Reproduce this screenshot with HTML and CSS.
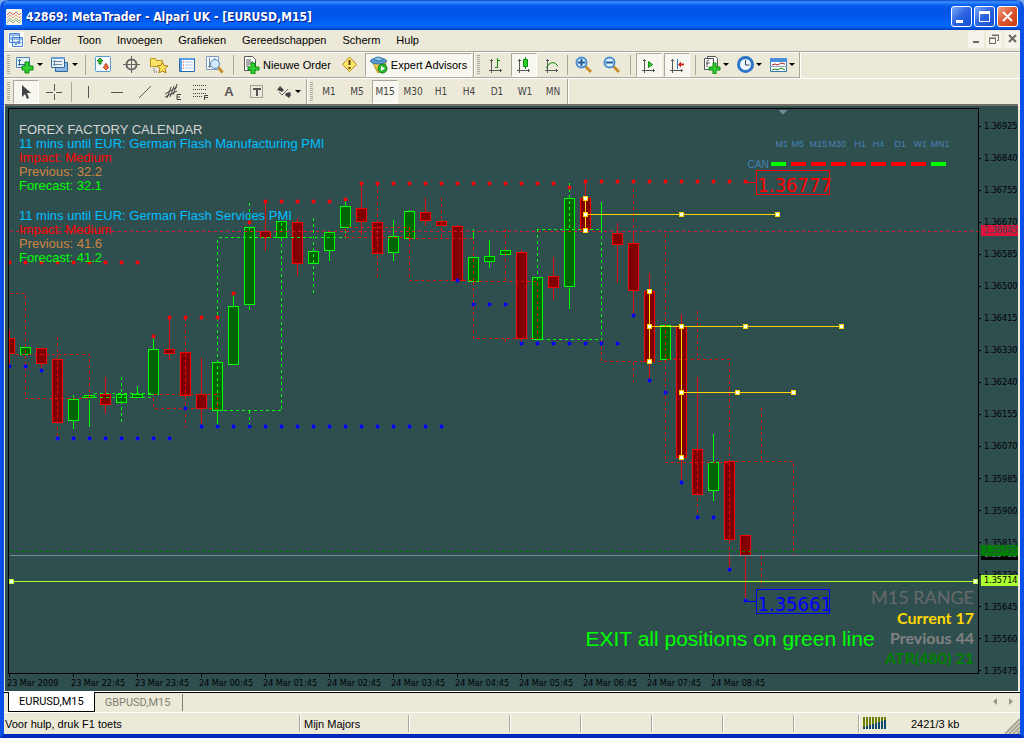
FILE: index.html
```html
<!DOCTYPE html>
<html lang="nl">
<head>
    <meta charset="UTF-8">
    <meta name="viewport" content="width=device-width, initial-scale=1.0">
    <title>42869: MetaTrader - Alpari UK - [EURUSD,M15]</title>
    <link rel="stylesheet" href="styles.css">
</head>
<body>
<div class="window">
    <header class="titlebar">
        <svg class="app-icon" width="16" height="16" viewBox="0 0 16 16"><rect width="16" height="16" rx="1" fill="#f6f3e8"/><path d="M1 6l3-3 3 3 3-3 3 3 2-2" fill="none" stroke="#d66"/><path d="M1 9l3-3 3 3 3-3 3 3 2-2" fill="none" stroke="#e8a070"/><path d="M1 12l3-3 3 3 3-3 3 3 2-2M1 14l3-3 3 3 3-3 3 3 2-2" fill="none" stroke="#9bb88a"/></svg>
        <h1>42869: MetaTrader - Alpari UK - [EURUSD,M15]</h1>
        <div class="window-buttons">
            <button class="win-btn" aria-label="Minimize"><svg width="19" height="19"><path d="M4 13h7v3H4z" fill="#fff"/></svg></button>
            <button class="win-btn" aria-label="Maximize"><svg width="19" height="19"><path d="M4.500 5.500h10v9h-10z" fill="none" stroke="#fff"/><path d="M4 4h11v3H4z" fill="#fff"/></svg></button>
            <button class="win-btn close" aria-label="Close"><svg width="19" height="19"><path d="M5 5l9 9M14 5l-9 9" stroke="#fff" stroke-width="2"/></svg></button>
        </div>
    </header>

    <nav class="menubar">
        <svg class="doc-icon" width="16" height="16" viewBox="0 0 16 16"><rect width="16" height="16" fill="#fff"/><path d="M1.500 1.500h10v9h-10zM4.500 5.500h10v9h-10z" fill="#eef4ff" stroke="#4a86d8"/><path d="M2 3h9M5 7h9" stroke="#4a86d8"/><path d="M6 9l2 4 2-4 1 3 2-2M3 5v3M5 4v1" fill="none" stroke="#4a86d8"/></svg>
        <button>Folder</button>
        <button>Toon</button>
        <button>Invoegen</button>
        <button>Grafieken</button>
        <button>Gereedschappen</button>
        <button>Scherm</button>
        <button>Hulp</button>
        <div class="mdi-buttons">
            <button aria-label="Minimize chart"><svg width="16" height="16"><path d="M5 10h6v2H5z" fill="#6b6a60"/></svg></button>
            <button aria-label="Restore chart"><svg width="16" height="16" fill="none" stroke="#6b6a60"><path d="M3.500 7.500h6v5h-6zM3 7h7M6 4.500h6.500v5H11M6 4h7"/></svg></button>
            <button aria-label="Close chart"><svg width="16" height="16"><path d="M5 4l7 7M12 4l-7 7" stroke="#6b6a60" stroke-width="2"/></svg></button>
        </div>
    </nav>

    <div class="toolbar-row">
        <div class="toolbar">
            <span class="grip"></span>
            <button class="tool drop" aria-label="New chart"><svg width="20" height="18"><path d="M.5 1.500h13v10H.5z" fill="#e9f2fb" stroke="#4a86b8"/><path d="M3.500 3v7M2 8.500h9M2 4.500h3" stroke="#2c6a9c"/><path d="M9 6h4v4h4v4h-4v3H9v-3H6v-4h3z" fill="#2fd02f" stroke="#0a8a0a"/></svg></button>
            <button class="tool drop" aria-label="Profiles"><svg width="20" height="18"><path d="M4.500 6.500h12v9h-12z" fill="#8fb9e4" stroke="#2c6a9c"/><path d="M.5 1.500h13v10H.5z" fill="#e9f2fb" stroke="#2c6a9c"/><path d="M0 2h14" stroke="#6ba3dc" stroke-width="2"/><path d="M3.500 4v6M2 8.500h9M2 5.500h9" stroke="#6b8aa8"/></svg></button>
            <span class="sep"></span>
            <button class="tool" aria-label="Market watch"><svg width="17" height="17"><rect x=".5" y=".5" width="15" height="15" rx="1" fill="#f4faff" stroke="#5a9bd0"/><path d="M5 2l3 3H6v3H4V5H2z" fill="#3fc63f" stroke="#167a16"/><path d="M11 14l-3-3h2V8h2v3h2z" fill="#f08a50" stroke="#c03a10"/></svg></button>
            <button class="tool" aria-label="Data window"><svg width="17" height="17" fill="none" stroke="#666"><circle cx="8.500" cy="8.500" r="5" stroke-width="2"/><path d="M8.500 0v17M0 8.500h17"/></svg></button>
            <button class="tool" aria-label="Navigator"><svg width="19" height="18"><path d="M.5 2.500h5l1 2h6v6H.5z" fill="#f8e268" stroke="#b89420"/><path d="M4 12v4h4" fill="none" stroke="#555" stroke-dasharray="1 1"/><path d="M12.500 6l1.500 3.500 4 .5-3 2.500 1 4.500-3.500-2-3.500 2 1-4.500-3-2.500 4-.5z" fill="#ffe45c" stroke="#a87c10"/></svg></button>
            <button class="tool" aria-label="Terminal"><svg width="17" height="16"><path d="M.5 1.500h15v13H.5z" fill="#fff" stroke="#2c6ab0"/><path d="M1 2h14M2 2v12" stroke="#5aa0e8" stroke-width="2"/><path d="M6 5h8M6 8h8M6 11h8" stroke="#a8c8e8"/><path d="M4 5h1M4 8h1M4 11h1" stroke="#d22"/></svg></button>
            <button class="tool" aria-label="Strategy tester"><svg width="18" height="18"><path d="M.5 .5h12v13H.5z" fill="#f4faff" stroke="#7a9cc0"/><path d="M3.500 2v10M2 10.500h9M8.500 2v10" stroke="#789"/><circle cx="9" cy="8" r="4.500" fill="#cfe8fa" stroke="#5a8ab8"/><path d="M12.500 11.500l4 5" stroke="#c8902c" stroke-width="3"/></svg></button>
            <span class="sep wide"></span>
            <button class="tool text order"><svg width="17" height="18"><path d="M1.500 .5h8l3 3v11h-11z" fill="#fff" stroke="#555"/><path d="M3 4h5M3 6h7M3 8h7M3 10h3" stroke="#555"/><path d="M8 7h4v4h4v3h-4v4H8v-4H5v-3h3z" fill="#2fd02f" stroke="#0a8a0a"/></svg>Nieuwe Order</button>
            <button class="tool" aria-label="MetaEditor"><svg width="17" height="17"><path d="M8.500 1l7 7.500-7 7-7-7z" fill="#ffe66a" stroke="#b58a10"/><path d="M8.500 4v5M8.500 11v2" stroke="#5a3c00" stroke-width="2"/></svg></button>
            <button class="tool text pressed"><svg width="18" height="18"><path d="M2 5l6 12 7-5 1-6z" fill="#f5cf4a" stroke="#b58a10"/><ellipse cx="8.500" cy="5" rx="8" ry="3" fill="#5a9ad0" stroke="#3a78b0"/><path d="M4 4q0-3 4-3t5 3q-5 2-9 0z" fill="#8cc4ec" stroke="#3a78b0"/><circle cx="12.500" cy="12.500" r="4.500" fill="#2fb82f" stroke="#0a7a0a"/><path d="M11 10l4 2.500-4 2.500z" fill="#fff"/></svg>Expert Advisors</button>
        </div>
        <div class="toolbar charts">
            <span class="grip"></span>
            <button class="tool" aria-label="Bar chart"><svg width="16" height="16" fill="none" stroke="#555"><path d="M3.500 2v14M1 13.500h13M2 3.500h3M12.500 12v3"/><path d="M7 10.500h2.500v-7H12M9.500 1v10" stroke="#0a8a0a"/></svg></button>
            <button class="tool pressed" aria-label="Candlesticks"><svg width="16" height="16" fill="none" stroke="#555"><path d="M3.500 2v14M1 13.500h13M2 3.500h3M12.500 12v3"/><path d="M9.500 0v12" stroke="#0a8a0a"/><path d="M7.500 2.500h4v7h-4z" fill="#2fd02f" stroke="#0a8a0a"/></svg></button>
            <button class="tool" aria-label="Line chart"><svg width="16" height="16" fill="none" stroke="#555"><path d="M3.500 2v14M1 13.500h13M2 3.500h3M12.500 12v3"/><path d="M2 11q6-10 12-2" stroke="#0a8a0a"/></svg></button>
            <span class="sep narrow"></span>
            <button class="tool" aria-label="Zoom in"><svg width="18" height="18"><path d="M10 10l6 6" stroke="#c8902c" stroke-width="3"/><circle cx="6.500" cy="6.500" r="5" fill="#e4f3ff" stroke="#4a8ed0" stroke-width="2"/><path d="M3 6.500h7M6.500 3v7" stroke="#1c5a9c" stroke-width="2"/></svg></button>
            <button class="tool" aria-label="Zoom out"><svg width="18" height="18"><path d="M10 10l6 6" stroke="#c8902c" stroke-width="3"/><circle cx="6.500" cy="6.500" r="5" fill="#e4f3ff" stroke="#4a8ed0" stroke-width="2"/><path d="M3 6.500h7" stroke="#1c5a9c" stroke-width="2"/></svg></button>
            <span class="sep wide"></span>
            <button class="tool pressed" aria-label="Auto scroll"><svg width="16" height="16" fill="none" stroke="#555"><path d="M3.500 2v14M1 13.500h13M2 3.500h3M12.500 12v3"/><path d="M7.500 4.500l4 3-4 3z" fill="#2fd02f" stroke="#0a8a0a"/></svg></button>
            <button class="tool pressed" aria-label="Chart shift"><svg width="16" height="16" fill="none" stroke="#555"><path d="M3.500 2v14M1 13.500h13M2 3.500h3M12.500 12v3"/><path d="M8.500 2v10" stroke="#2c78c8"/><path d="M9 7.500l3-3v2h3v2h-3v2z" fill="#c22" stroke="none"/></svg></button>
            <span class="sep wide"></span>
            <button class="tool drop" aria-label="Indicators"><svg width="18" height="18"><path d="M3.500 .5h8l2 2v10h-10z" fill="#fff" stroke="#555"/><path d="M.5 2.500h9v11h-9z" fill="#fff" stroke="#555"/><path d="M3 11V6q0-2 2-2M2 7h4" fill="none" stroke="#555"/><path d="M9 7h3v4h4v3h-4v4H9v-4H5v-3h4z" fill="#2fd02f" stroke="#0a8a0a"/></svg></button>
            <button class="tool drop" aria-label="Periods"><svg width="18" height="18"><circle cx="8.500" cy="8.500" r="7" fill="#eef7ff" stroke="#2c74c4" stroke-width="3"/><path d="M8.500 4v5h4" fill="none" stroke="#345"/></svg></button>
            <button class="tool drop" aria-label="Templates"><svg width="18" height="16"><path d="M.5 1.500h16v13H.5z" fill="#fff" stroke="#3a78b0"/><path d="M0 3h17" stroke="#4a90d8" stroke-width="4"/><path d="M2 8l3-1 3 1 3-2 4 1" fill="none" stroke="#a22"/><path d="M0 9.500h17" stroke="#8ab"/><path d="M2 13l3-1 3 1 3-2 4 2" fill="none" stroke="#0a8a0a"/></svg></button>
        </div>
    </div>

    <div class="toolbar-row">
        <div class="toolbar">
            <span class="grip"></span>
            <button class="tool pressed" aria-label="Cursor"><svg width="16" height="16"><path d="M4 1v12l3-3 2 5 2-1-2-5h4z" fill="#444"/></svg></button>
            <button class="tool" aria-label="Crosshair"><svg width="16" height="16" shape-rendering="crispEdges"><path d="M8.500 0v7M8.500 10v7M0 8.500h7M10 8.500h7" stroke="#555"/></svg></button>
            <span class="sep"></span>
            <button class="tool" aria-label="Vertical line"><svg width="16" height="16"><path d="M7.500 2v12" stroke="#555"/></svg></button>
            <button class="tool" aria-label="Horizontal line"><svg width="16" height="16"><path d="M2 8.500h12" stroke="#555"/></svg></button>
            <button class="tool" aria-label="Trendline"><svg width="16" height="16"><path d="M2 14L14 2" stroke="#555"/></svg></button>
            <button class="tool" aria-label="Equidistant channel"><svg width="18" height="18" stroke="#444"><path d="M1 11L13 4M1 14L13 8M3 15L7 4M6 14l4-11M9 12l4-11"/><path d="M17 11.500h-4v5h4M13 14h3" fill="none"/></svg></button>
            <button class="tool" aria-label="Fibonacci"><svg width="18" height="18" stroke="#444"><path d="M1 2.500h13M1 6.500h13M1 10.500h13M1 13.500h9" stroke-dasharray="1 1"/><path d="M16 12.500h-3.500V17M13 14.500h3" fill="none"/></svg></button>
            <button class="tool glyph">A</button>
            <button class="tool" aria-label="Text label"><svg width="16" height="16" fill="none" stroke="#555"><path d="M1.500 1.500h12v12h-12z" stroke-dasharray="1 1"/><path d="M4 5h8M8 5v7" stroke-width="2"/></svg></button>
            <button class="tool drop" aria-label="Arrows"><svg width="18" height="16"><path d="M4 2l4 4-2 2-2-1-3-1zM10 9l4-1 1 3-2 3-4-3z" fill="#444"/><path d="M3 8l3 3 6-6" fill="none" stroke="#666"/></svg></button>
        </div>
        <div class="toolbar periods">
            <span class="grip"></span>
            <button class="tool">M1</button>
            <button class="tool">M5</button>
            <button class="tool pressed">M15</button>
            <button class="tool">M30</button>
            <button class="tool">H1</button>
            <button class="tool">H4</button>
            <button class="tool">D1</button>
            <button class="tool">W1</button>
            <button class="tool">MN</button>
        </div>
    </div>

    <main class="chart">
        <div class="plot">
            <svg class="candles" width="100%" height="100%">
                <defs>
                    <rect id="handle" x="-2" y="-2" width="4" height="4" fill="#fff"/>
                </defs>
                <g transform="translate(-8.5 -108.5)">
                    <path class="shift-mark" d="M777 109h10l-5 5z"/>

                    <!-- wicks -->
                    <path class="wick down" d="M9 329V364M41 363V368M105 376V413M169 317V359M201 357V423M265 201V250M297 217V275M361 183V234M425 197V225M457 224V227M521 249V342M553 256V299M585 181V198M617 222V282M633 232V313M649 272V378M681 313V479M697 376V449M729 555V567M745 555V600"/>
                    <path class="wick up" d="M73 394V428M89 399V426M137 385V394M153 336V349M217 410V425M233 293V306M249 305V309M329 230V260M345 199V206M393 219V260M409 209V211M473 228V238M489 239V267M569 287V308M601 201V230M713 433V500"/>

                    <!-- candle bodies -->
                    <g class="body down">
                        <path d="M9 338h5v15H9"/>
                        <rect x="36" y="348" width="10" height="15"/>
                        <rect x="52" y="359" width="10" height="63"/>
                        <rect x="100" y="394" width="10" height="10"/>
                        <rect x="164" y="349" width="10" height="4"/>
                        <rect x="180" y="352" width="10" height="43"/>
                        <rect x="196" y="394" width="10" height="14"/>
                        <rect x="260" y="231" width="10" height="6"/>
                        <rect x="292" y="222" width="10" height="41"/>
                        <rect x="356" y="208" width="10" height="13"/>
                        <rect x="372" y="222" width="10" height="31"/>
                        <rect x="420" y="212" width="10" height="8"/>
                        <rect x="436" y="221" width="10" height="4"/>
                        <rect x="452" y="226" width="10" height="54"/>
                        <rect x="516" y="252" width="10" height="86"/>
                        <rect x="548" y="276" width="10" height="11"/>
                        <rect x="580" y="198" width="10" height="31"/>
                        <rect x="612" y="233" width="10" height="11"/>
                        <rect x="628" y="243" width="10" height="47"/>
                        <rect x="644" y="291" width="10" height="70"/>
                        <rect x="676" y="326" width="10" height="131"/>
                        <rect x="692" y="449" width="10" height="45"/>
                        <rect x="724" y="461" width="10" height="78"/>
                        <rect x="740" y="535" width="10" height="20"/>
                    </g>
                    <g class="body up">
                        <rect x="20" y="347" width="10" height="7"/>
                        <rect x="68" y="399" width="10" height="21"/>
                        <rect x="84" y="395" width="10" height="2"/>
                        <rect x="116" y="394" width="10" height="8"/>
                        <rect x="132" y="394" width="10" height="3"/>
                        <rect x="148" y="349" width="10" height="45"/>
                        <rect x="212" y="362" width="10" height="48"/>
                        <rect x="228" y="306" width="10" height="58"/>
                        <rect x="244" y="227" width="10" height="77"/>
                        <rect x="276" y="221" width="10" height="16"/>
                        <rect x="308" y="251" width="10" height="12"/>
                        <rect x="324" y="232" width="10" height="18"/>
                        <rect x="340" y="206" width="10" height="21"/>
                        <rect x="388" y="236" width="10" height="16"/>
                        <rect x="404" y="211" width="10" height="27"/>
                        <rect x="468" y="257" width="10" height="24"/>
                        <rect x="484" y="256" width="10" height="5"/>
                        <rect x="500" y="250" width="10" height="4"/>
                        <rect x="532" y="277" width="10" height="62"/>
                        <rect x="564" y="198" width="10" height="88"/>
                        <rect x="660" y="325" width="10" height="34"/>
                        <rect x="708" y="462" width="10" height="28"/>
                    </g>

                    <!-- higher timeframe boxes -->
                    <path class="box up" d="M93 393H153M81 397H153M121 376V424M217 410V237H345V228M217 410H281V237M249 202V230M249 410V426M313 217V295M281 231V221M537 339V229H601V339H537M569 182V229"/>
                    <path class="box down" d="M9 293H25V398H89V354H14M57 336V439M153 394H217V408H153ZM185 317V427M345 237H409V227H345ZM377 183V276M409 238H473V280H409ZM441 197V237M473 281V338H537V281H473M505 228V280M505 338V342M601 339V361H665M633 188V243M633 361V381M665 233V462H729V359H665M697 310V359M697 449V517M729 461H793V555H729V461M761 407V458M761 555V586"/>

                    <!-- fractal stops -->
                    <path class="dots down" d="M9 262H138M265 201H330M361 183H554M585 181H746M169 317H218M153 336h1M233 293h1M249 222h1M345 199h1M569 187h1"/>
                    <path class="dots up" d="M9 366H26M41 370h1M57 438H170M185 408h1M201 426H442M457 280h1M473 304H506M521 343H618M633 315h1M649 380h1M665 392h1M681 482h1M697 517H714M729 569h1M745 600h1"/>

                    <!-- price levels -->
                    <path class="level bid-high" d="M9 231H978"/>
                    <path class="level target" d="M9 551H978"/>
                    <path class="level bid" d="M9 555H978"/>
                    <path class="level exit" d="M9 581H978"/>

                    <path class="trend" d="M585 198V230M585 214H777M649 291V361M649 326H841M681 326V457M681 392H793"/>
                    <g class="handles">
                        <use href="#handle" x="585" y="198"/><use href="#handle" x="585" y="214"/><use href="#handle" x="585" y="230"/>
                        <use href="#handle" x="681" y="214"/><use href="#handle" x="777" y="214"/>
                        <use href="#handle" x="649" y="291"/><use href="#handle" x="649" y="326"/><use href="#handle" x="649" y="361"/>
                        <use href="#handle" x="681" y="326"/><use href="#handle" x="745" y="326"/><use href="#handle" x="841" y="326"/>
                        <use href="#handle" x="681" y="392"/><use href="#handle" x="681" y="457"/><use href="#handle" x="737" y="392"/><use href="#handle" x="793" y="392"/>
                    </g>
                    <g class="handles exit"><use href="#handle" x="11" y="581"/><use href="#handle" x="975" y="581"/></g>

                    <g class="price-box high"><path d="M745 182H756V170H829V194H756V182"/><text x="757" y="191">1.36777</text></g>
                    <g class="price-box low"><path d="M745 601H756V589H829V613H756V601"/><text x="757" y="610">1.35661</text></g>

                    <!-- candle colour per timeframe -->
                    <g class="frames">
                        <text x="775" y="146">M1</text><text x="791" y="146">M5</text><text x="809" y="146">M15</text>
                        <text x="828" y="146">M30</text><text x="854" y="146">H1</text><text x="872" y="146">H4</text>
                        <text x="894" y="146">D1</text><text x="913" y="146">W1</text><text x="930" y="146">MN1</text>
                        <text class="pair" x="747" y="167">CAN</text>
                        <path class="short" d="M790 163H925"/>
                        <path class="long" d="M770 163H785M930 163H945"/>
                    </g>
                    <text class="exit-note" x="585" y="645">EXIT all positions on green line</text>
                </g>
            </svg>

            <div class="calendar">
                <h2>FOREX FACTORY CALENDAR</h2>
                <div class="event">
                    <p class="headline">11 mins until EUR: German Flash Manufacturing PMI</p>
                    <p class="impact">Impact: Medium</p>
                    <p class="previous">Previous: 32.2</p>
                    <p class="forecast">Forecast: 32.1</p>
                </div>
                <div class="event">
                    <p class="headline">11 mins until EUR: German Flash Services PMI</p>
                    <p class="impact">Impact: Medium</p>
                    <p class="previous">Previous: 41.6</p>
                    <p class="forecast">Forecast: 41.2</p>
                </div>
            </div>

            <div class="range">
                <p class="range-title">M15 RANGE</p>
                <p class="range-current">Current 17</p>
                <p class="range-previous">Previous 44</p>
                <p class="range-atr">ATR(480) 21</p>
            </div>
        </div>

        <div class="price-axis">
            <ul>
                <li>1.36925</li><li>1.36840</li><li>1.36755</li><li>1.36670</li><li>1.36585</li><li>1.36500</li>
                <li>1.36415</li><li>1.36330</li><li>1.36240</li><li>1.36155</li><li>1.36070</li><li>1.35985</li>
                <li>1.35900</li><li>1.35815</li><li>1.35730</li><li>1.35645</li><li>1.35560</li><li>1.35475</li>
            </ul>
            <span class="tag tag-high">1.36645</span>
            <span class="tag tag-bid">1.35783</span>
            <span class="tag tag-target">1.35793</span>
            <span class="tag tag-exit">1.35714</span>
        </div>

        <ul class="time-axis">
            <li>23 Mar 2009</li><li>23 Mar 22:45</li><li>23 Mar 23:45</li><li>24 Mar 00:45</li>
            <li>24 Mar 01:45</li><li>24 Mar 02:45</li><li>24 Mar 03:45</li><li>24 Mar 04:45</li>
            <li>24 Mar 05:45</li><li>24 Mar 06:45</li><li>24 Mar 07:45</li><li>24 Mar 08:45</li>
        </ul>
    </main>

    <div class="tabs">
        <button class="tab active">EURUSD,M15</button>
        <button class="tab">GBPUSD,M15</button>
        <div class="tab-scroll">
            <button aria-label="Previous tab"><svg width="5" height="8"><path d="M5 0v7L1 3.500z" fill="#9a978a"/></svg></button>
            <button aria-label="Next tab"><svg width="5" height="8"><path d="M0 0v7l4-3.500z" fill="#9a978a"/></svg></button>
        </div>
    </div>

    <footer class="statusbar">
        <span class="help">Voor hulp, druk F1 toets</span>
        <span class="cell profile">Mijn Majors</span>
        <span class="cell"></span>
        <span class="cell"></span>
        <span class="cell"></span>
        <span class="cell"></span>
        <span class="cell"></span>
        <span class="cell last"></span>
        <span class="cell traffic">
            <svg width="24" height="13" shape-rendering="crispEdges"><path d="M1 0v12M4 0v12M7 0v12M10 0v12M13 0v12M16 0v12M19 0v12M22 0v12" stroke="#6b8000" stroke-width="2"/><path d="M1 10v2M4 9v3M7 8v4M10 7v5M13 6v6M16 5v7M19 4v8M22 3v9" stroke="#0f4a6e" stroke-width="2"/></svg>
            2421/3 kb
        </span>
        <svg class="resize" width="16" height="16"><path d="M1 16L16 1M5 16L16 5M9 16l7-7M13 16l3-3" stroke="#a9a695" stroke-width="2"/></svg>
    </footer>
</div>
</body>
</html>
```

FILE: styles.css
```css
* {
    margin: 0;
    padding: 0;
    box-sizing: border-box;
}

body {
    height: 100vh;
    background: #7aa7e8;
    font-family: 'Liberation Sans', Arial, sans-serif;
    font-size: 11px;
    color: #000;
    overflow: hidden;
}

button {
    font: inherit;
    color: inherit;
    background: none;
    border: none;
}

ul {
    list-style: none;
}

.window {
    height: 100vh;
    display: flex;
    flex-direction: column;
    background: #ece9d8;
    border: 4px solid #0a50e8;
    border-top: none;
    border-bottom-color: #0028b8;
    border-radius: 8px 8px 0 0;
    overflow: hidden;
}

/* Title bar */
.titlebar {
    height: 30px;
    margin: 0 -4px;
    padding: 3px 6px 0 6px;
    display: flex;
    align-items: center;
    gap: 4px;
    flex-shrink: 0;
    background: linear-gradient(to bottom, #0a48c8 0, #3a90ff 2px, #0860f0 5px, #0054e3 10px, #0058ee 18px, #0468ff 26px, #0048d0 29px, #0038b8 30px);
}

.titlebar h1 {
    flex: 1;
    font-family: 'DejaVu Sans Condensed', Verdana, sans-serif;
    font-size: 12px;
    font-weight: bold;
    color: #fff;
    text-shadow: 1px 1px 0 #0a1883;
    white-space: nowrap;
}

.window-buttons {
    display: flex;
    gap: 2px;
}

.win-btn {
    width: 21px;
    height: 21px;
    border: 1px solid #fff;
    border-radius: 3px;
    background: linear-gradient(135deg, #7aa8f8, #2a62e0 50%, #1a50d0);
}

.win-btn svg {
    display: block;
}

.win-btn.close {
    background: linear-gradient(135deg, #f0a080, #dc5530 50%, #c83c10);
}

/* Menu */
.menubar {
    height: 22px;
    padding-left: 4px;
    display: flex;
    align-items: flex-start;
    flex-shrink: 0;
    border-bottom: 1px solid #aca899;
    box-shadow: 0 1px 0 #fff;
}

.menubar > button {
    height: 20px;
    padding: 0 8px;
}

.doc-icon {
    margin: 2px -2px 0 0;
}

.mdi-buttons {
    margin-left: auto;
    display: flex;
    gap: 2px;
}

.mdi-buttons button {
    width: 16px;
    height: 17px;
    margin-top: 1px;
    background: #f5f3ea;
}

/* Toolbars */
.toolbar-row {
    height: 27px;
    display: flex;
    flex-shrink: 0;
    border-bottom: 1px solid #fff;
}

.toolbar {
    display: flex;
    align-items: center;
    padding-left: 3px;
    border-right: 1px solid #aca899;
    border-bottom: 1px solid #aca899;
    box-shadow: 1px 0 0 #fff;
}

.grip {
    width: 3px;
    height: 20px;
    margin-right: 2px;
    background: repeating-linear-gradient(to bottom, #aca899 0 1px, #ece9d8 1px 2px);
}

.tool {
    width: 28px;
    height: 24px;
    display: flex;
    align-items: center;
    justify-content: center;
}

.tool.pressed {
    width: 26px;
    margin: 0 1px;
    background: #f7f6ef;
    border: 1px solid;
    border-color: #aca899 #fff #fff #aca899;
}

.tool.text {
    width: auto;
    padding: 0 4px;
    gap: 3px;
    white-space: nowrap;
}

.tool.order {
    padding: 0 5px;
}

.tool.drop {
    width: 35px;
    gap: 1px;
}

.charts .tool.drop {
    width: 33px;
}

.tool.drop::after {
    content: "";
    border: 3px solid transparent;
    border-top-color: #000;
    border-bottom: none;
}

.tool.glyph {
    font-size: 13px;
    font-weight: bold;
    color: #555;
}

.sep {
    width: 1px;
    height: 20px;
    margin: 0 3px;
    background: #aca899;
}

.sep.narrow {
    margin: 0 2px 0 1px;
}

.sep.wide {
    margin: 0 4px;
}

.periods .tool {
    font-family: 'DejaVu Sans Condensed', Verdana, sans-serif;
    font-size: 10px;
    color: #444;
}

/* Chart */
.chart {
    flex: 1;
    min-height: 0;
    padding: 2px 0 0 3px;
    margin: 0 2px 0 1px;
    display: grid;
    grid-template-columns: 1fr 39px;
    grid-template-rows: 1fr 17px;
    background: #2f4f4f;
    box-shadow: 0 -2px 0 #716f64;
    font-family: 'DejaVu Sans Condensed', Verdana, sans-serif;
    font-size: 9px;
}

.plot {
    position: relative;
    min-width: 0;
    min-height: 0;
    border: 1px solid #000;
}

.candles {
    position: absolute;
    left: 0;
    top: 0;
    fill: none;
    shape-rendering: crispEdges;
}

.shift-mark {
    fill: #778899;
}

.wick.down,
.box.down {
    stroke: #e01010;
}

.wick.up,
.box.up {
    stroke: #00ff00;
}

.box {
    stroke-dasharray: 3 3;
}

.body.down {
    fill: #800000;
    stroke: #ff0000;
}

.body.up {
    fill: #006400;
    stroke: #00ff00;
}

.dots {
    stroke-width: 4;
    stroke-linecap: round;
    stroke-dasharray: 0 16;
    shape-rendering: auto;
}

.dots.down {
    stroke: #ff0000;
}

.dots.up {
    stroke: #0000ff;
}

.level.bid-high {
    stroke: #dc143c;
    stroke-dasharray: 3 3;
}

.level.target {
    stroke: #008000;
    stroke-dasharray: 3 3;
}

.level.bid {
    stroke: #778899;
}

.level.exit {
    stroke: #adff2f;
}

.trend,
.handles {
    stroke: #ffd700;
}

.handles.exit {
    stroke: #adff2f;
}

.price-box {
    font-size: 20px;
}

.price-box.high path {
    stroke: #ff0000;
}

.price-box.high text {
    fill: #ff0000;
}

.price-box.low path {
    stroke: #0000ff;
}

.price-box.low text {
    fill: #0000ff;
}

.frames text {
    font-family: 'Liberation Sans', Arial, sans-serif;
    font-size: 9px;
    fill: #4682b4;
}

.frames .pair {
    font-size: 10px;
}

.frames path {
    stroke-width: 4;
}

.frames .short {
    stroke: #ff0000;
    stroke-dasharray: 15 5;
}

.frames .long {
    stroke: #00ff00;
}

.exit-note {
    font-family: 'Liberation Sans', Arial, sans-serif;
    font-size: 21px;
    fill: #00ff00;
}

.calendar {
    position: absolute;
    left: 10px;
    top: 14px;
    font-family: 'Liberation Sans', Arial, sans-serif;
    font-size: 13px;
    line-height: 14px;
    white-space: nowrap;
}

.calendar h2 {
    font-size: 13px;
    font-weight: normal;
    color: #d3d3d3;
}

.event {
    margin-bottom: 16px;
}

.headline {
    color: #00bfff;
}

.impact {
    color: #ff0000;
}

.previous {
    color: #cd853f;
}

.forecast {
    color: #00ff00;
}

.range {
    position: absolute;
    right: 4px;
    bottom: 5px;
    font-family: Lato, sans-serif;
    font-size: 16px;
    font-weight: bold;
    line-height: 20px;
    text-align: right;
}

.range-title {
    font-size: 18px;
    font-weight: normal;
    line-height: 22px;
    color: #696969;
}

.range-current {
    color: #ffd700;
}

.range-previous {
    color: #808080;
}

.range-atr {
    color: #008000;
}

.price-axis {
    grid-row: 1 / 3;
    grid-column: 2;
    position: relative;
}

.price-axis ul {
    height: 100%;
    padding: 12px 0 14px;
    display: flex;
    flex-direction: column;
    justify-content: space-between;
}

.price-axis li {
    height: 12px;
    line-height: 12px;
    display: flex;
    align-items: center;
    gap: 3px;
}

.price-axis li::before {
    content: "";
    width: 2px;
    height: 1px;
    background: #000;
}

.tag {
    position: absolute;
    left: 2px;
    right: 0;
    height: 11px;
    padding-left: 3px;
    line-height: 11px;
}

.tag-high {
    top: 117px;
    background: #dc143c;
    color: #2f4f4f;
}

.tag-bid {
    top: 441px;
    background: #000;
    color: #778899;
}

.tag-target {
    top: 437px;
    background: #008000;
    color: #2f4f4f;
}

.tag-exit {
    top: 467px;
    background: #adff2f;
}

.time-axis {
    grid-row: 2;
    grid-column: 1;
    display: grid;
    grid-auto-flow: column;
    grid-auto-columns: 64px;
    justify-content: start;
}

.time-axis li {
    margin-left: -1px;
    white-space: nowrap;
    line-height: 12px;
}

.time-axis li::before {
    content: "";
    display: block;
    width: 1px;
    height: 3px;
    margin-left: 2px;
    background: #000;
}

/* Chart tabs */
.tabs {
    height: 22px;
    padding-left: 4px;
    display: flex;
    flex-shrink: 0;
    border-top: 1px solid #fff;
    border-bottom: 1px solid #fff;
    box-shadow: inset 0 1px 0 #000;
}

.tab {
    height: 17px;
    margin-top: 2px;
    padding: 0 12px 0 10px;
    font-family: Roboto, sans-serif;
    color: #827f72;
    border-right: 1px solid #827f72;
}

.tab.active {
    height: 20px;
    margin-top: 0;
    padding: 0 10px;
    background: #fff;
    color: #000;
    border: 1px solid #000;
    border-top: none;
}

.tab-scroll {
    margin-left: auto;
    padding-right: 6px;
    display: flex;
    align-items: center;
    gap: 12px;
}

/* Status bar */
.statusbar {
    height: 21px;
    display: flex;
    align-items: center;
    flex-shrink: 0;
}

.help {
    flex: 1;
    padding-left: 1px;
}

.cell {
    width: 71px;
    height: 17px;
    padding-left: 4px;
    display: flex;
    align-items: center;
    border-left: 1px solid #aca899;
    box-shadow: inset 1px 0 0 #fff;
}

.cell.profile {
    width: 109px;
}

.cell.profile + .cell {
    width: 101px;
}

.cell.last {
    width: 65px;
}

.cell.traffic {
    width: 146px;
    gap: 24px;
}

.resize {
    align-self: flex-end;
}
```
